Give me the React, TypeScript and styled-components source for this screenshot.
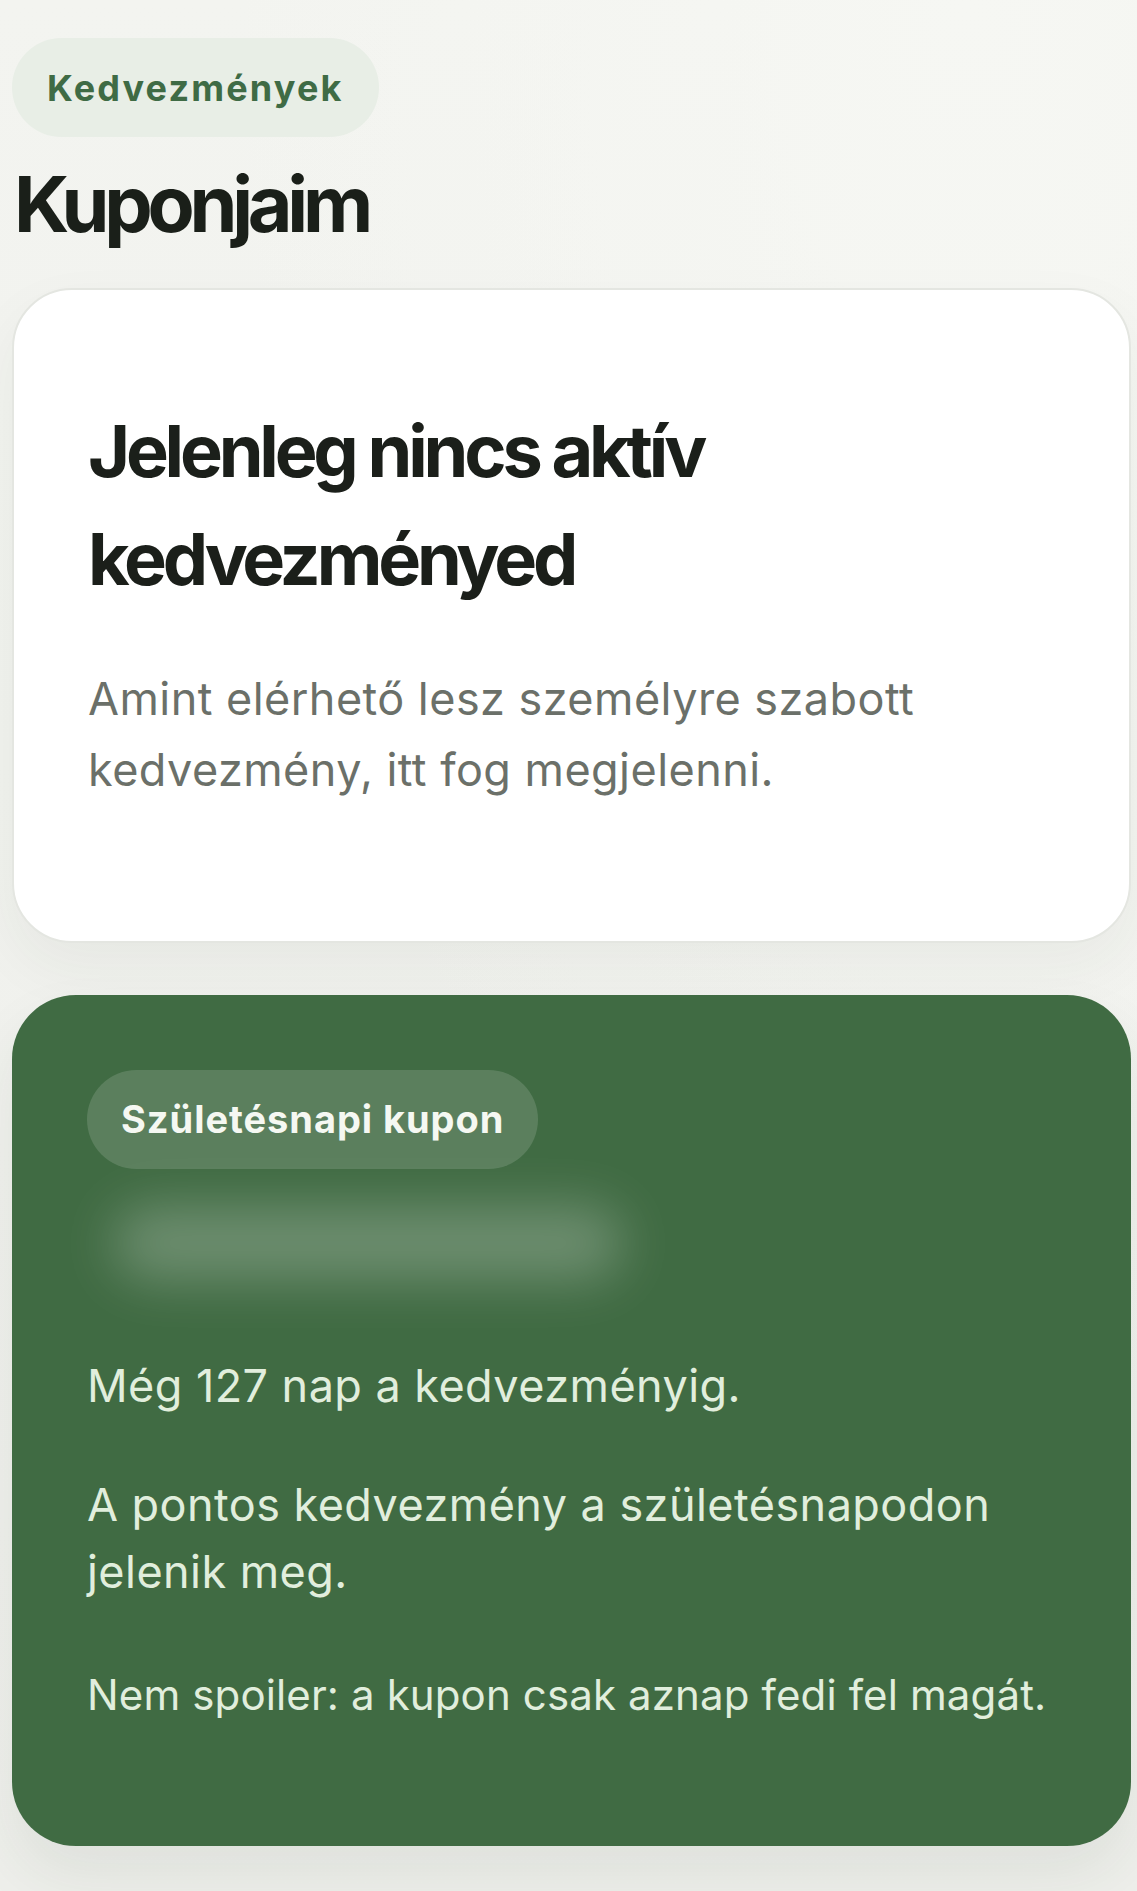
import React from "react";
import styled, {createGlobalStyle} from "styled-components";

const GlobalStyle = createGlobalStyle`
	* {
		box-sizing: border-box;
	}
	html,
	body {
		margin: 0;
		padding: 0;
	}
	body {
		font-family: Inter, "Noto Sans", "Liberation Sans", sans-serif;
		background: #f1f2ee;
		-webkit-font-smoothing: antialiased;
	}
`;

export default function App() {
	return (
		<>
			<GlobalStyle />
			<Page>
				<Header>
					<Eyebrow>Kedvezmények</Eyebrow>
					<PageTitle>Kuponjaim</PageTitle>
				</Header>

				<EmptyCard>
					<EmptyTitle>Jelenleg nincs aktív kedvezményed</EmptyTitle>
					<EmptyText>Amint elérhető lesz személyre szabott kedvezmény, itt fog megjelenni.</EmptyText>
				</EmptyCard>

				<BirthdayCard>
					<CouponTag>Születésnapi kupon</CouponTag>
					<HiddenCode aria-hidden="true" />
					<CardText>Még 127 nap a kedvezményig.</CardText>
					<CardText>A pontos kedvezmény a születésnapodon jelenik meg.</CardText>
					<CardText $small>Nem spoiler: a kupon csak aznap fedi fel magát.</CardText>
				</BirthdayCard>
			</Page>
		</>
	);
}

const Page = styled.main`
	min-height: 1891px;
	padding: 38px 6px 40px 12px;

	display: flex;
	flex-direction: column;

	background: radial-gradient(ellipse at 85% 0%, #f6f7f3 0%, rgba(246, 247, 243, 0) 55%),
		linear-gradient(180deg, #f3f4f0 0%, #eeefeb 100%);
`;

const Header = styled.header`
	display: flex;
	flex-direction: column;
	align-items: flex-start;
	gap: 25px;

	margin-bottom: 41px;
`;

const Eyebrow = styled.span`
	display: inline-flex;
	align-items: center;

	height: 99px;
	padding: 0 35px 0 35px;

	border-radius: 999px;
	background-color: #e8eee6;

	color: #3f6b45;
	font-size: 36px;
	font-weight: 700;
	letter-spacing: 0.06em;
`;

const PageTitle = styled.h1`
	margin: 0;
	padding-left: 2px;

	color: #1a1f19;
	font-size: 77px;
	font-weight: 700;
	line-height: 1.1;
	letter-spacing: -0.068em;
`;

const EmptyCard = styled.section`
	display: flex;
	flex-direction: column;
	gap: 50px;

	padding: 107px 74px 136px 74px;
	margin-bottom: 52px;

	background-color: #ffffff;
	border: 2px solid #e4e6e1;
	border-radius: 60px;
	box-shadow: 0 24px 60px rgba(40, 50, 35, 0.05);
`;

const EmptyTitle = styled.h2`
	margin: 0;

	color: #1b1f1a;
	font-size: 72px;
	font-weight: 700;
	line-height: 108px;
	letter-spacing: -0.058em;
`;

const EmptyText = styled.p`
	margin: 0;

	color: #6b7069;
	font-size: 45px;
	font-weight: 400;
	line-height: 71px;
	letter-spacing: 0.01em;
`;

const BirthdayCard = styled.section`
	display: flex;
	flex-direction: column;
	align-items: flex-start;
	gap: 52px;

	padding: 75px 40px 118px 75px;

	background-color: #406b43;
	border-radius: 64px;
	box-shadow: 0 30px 60px rgba(40, 60, 35, 0.08);
`;

const CouponTag = styled.span`
	display: inline-flex;
	align-items: center;

	height: 99px;
	padding: 0 34px 0 34px;

	border-radius: 999px;
	background-color: rgba(255, 255, 255, 0.14);

	color: #f5f8f2;
	font-size: 38px;
	font-weight: 700;
	letter-spacing: 0.025em;
`;

const HiddenCode = styled.div`
	width: 510px;
	height: 74px;
	margin: -15px 0 20px 26px;

	border-radius: 37px;
	background-color: rgba(255, 255, 255, 0.24);
	filter: blur(26px);
`;

const CardText = styled.p<{$small?: boolean}>`
	max-width: 990px;
	margin: ${({$small}) => ($small ? "4px 0 0" : "0")};

	color: #e1eedd;
	font-size: ${({$small}) => ($small ? "42px" : "45px")};
	font-weight: 400;
	line-height: 67px;
	letter-spacing: ${({$small}) => ($small ? "0.003em" : "0.01em")};
`;
